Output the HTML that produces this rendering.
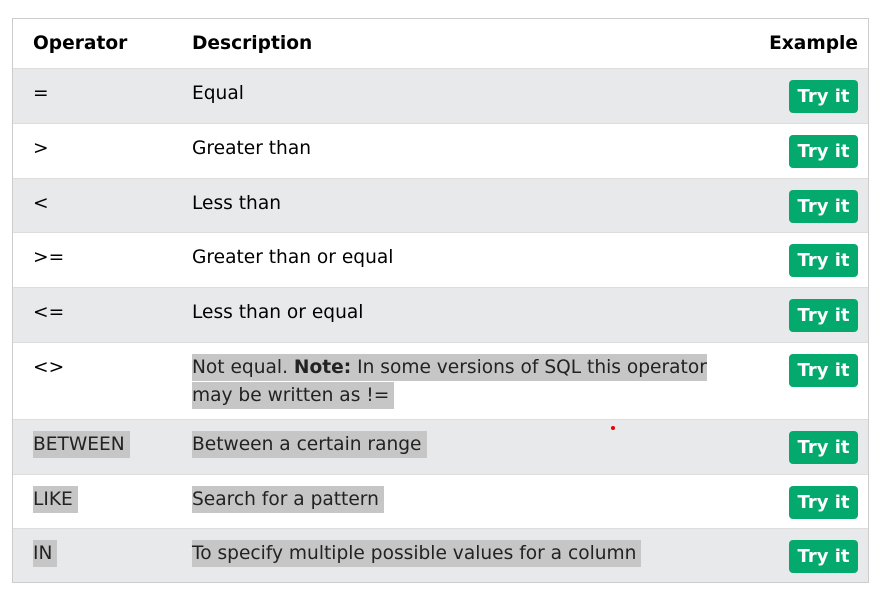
<!DOCTYPE html>
<html><head><meta charset="utf-8"><style>
body{margin:0;background:#fff;font-family:"DejaVu Sans",Verdana,sans-serif;font-size:18.6px;color:#000;}
.t{position:absolute;left:12px;top:18px;width:855px;height:563px;border:1px solid #ccc;}
.r{position:absolute;left:0;width:855px;border-top:1px solid #ddd;box-sizing:border-box;}
.g{background:#e7e9eb}
.c1{position:absolute;left:20px;line-height:28px;}
.c2{position:absolute;left:179px;line-height:28px;}
.h{background:#c6c6c6;color:#222;padding:3px 5px 3px 0;}
.b{position:absolute;left:776px;width:69px;height:33px;background:#04aa6d;color:#fff;border-radius:4px;font-size:18px;line-height:33px;text-align:center;font-weight:bold;}
</style></head><body>
<div class="t">
<div class="r" style="top:0;height:49px;border-top:none;font-weight:bold;">
<span class="c1" style="top:11px">Operator</span><span class="c2" style="top:11px">Description</span><span style="position:absolute;right:10px;top:11px;line-height:28px">Example</span></div>
<div class="r g" style="top:49px;height:55px"><span class="c1" style="top:11px">=</span><span class="c2" style="top:11px">Equal</span><div class="b" style="top:11px">Try it</div></div>
<div class="r" style="top:104px;height:55px"><span class="c1" style="top:11px">&gt;</span><span class="c2" style="top:11px">Greater than</span><div class="b" style="top:11px">Try it</div></div>
<div class="r g" style="top:159px;height:54px"><span class="c1" style="top:11px">&lt;</span><span class="c2" style="top:11px">Less than</span><div class="b" style="top:11px">Try it</div></div>
<div class="r" style="top:213px;height:55px"><span class="c1" style="top:11px">&gt;=</span><span class="c2" style="top:11px">Greater than or equal</span><div class="b" style="top:11px">Try it</div></div>
<div class="r g" style="top:268px;height:55px"><span class="c1" style="top:11px">&lt;=</span><span class="c2" style="top:11px">Less than or equal</span><div class="b" style="top:11px">Try it</div></div>
<div class="r" style="top:323px;height:77px"><span class="c1" style="top:11px">&lt;&gt;</span><span class="c2" style="top:11px;width:545px"><span class="h">Not equal. <b>Note:</b> In some versions of SQL this operator may be written as != </span></span><div class="b" style="top:11px">Try it</div></div>
<div class="r g" style="top:400px;height:55px"><span class="c1" style="top:11px"><span class="h">BETWEEN </span></span><span class="c2" style="top:11px"><span class="h">Between a certain range </span></span><div class="b" style="top:11px">Try it</div></div>
<div class="r" style="top:455px;height:54px"><span class="c1" style="top:11px"><span class="h">LIKE </span></span><span class="c2" style="top:11px"><span class="h">Search for a pattern </span></span><div class="b" style="top:11px">Try it</div></div>
<div class="r g" style="top:509px;height:54px"><span class="c1" style="top:11px"><span class="h">IN </span></span><span class="c2" style="top:11px"><span class="h">To specify multiple possible values for a column </span></span><div class="b" style="top:11px">Try it</div></div>
</div>
<div style="position:absolute;left:611px;top:426px;width:4px;height:4px;border-radius:2px;background:#e00"></div>
</body></html>
